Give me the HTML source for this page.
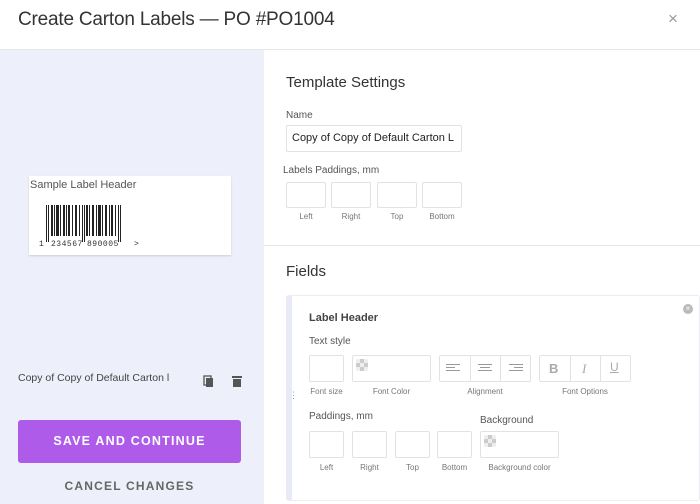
<!DOCTYPE html>
<html><head><meta charset="utf-8"><style>
*{box-sizing:border-box;margin:0;padding:0}
body{width:700px;height:504px;overflow:hidden;background:#fff;font-family:"Liberation Sans",sans-serif;color:#333;position:relative}
.a{position:absolute}
.box{position:absolute;border:1px solid #e2e2e2;border-radius:2px;background:#fff}
.lb{position:absolute;font-size:8px;color:#777;text-align:center}
.hd{position:absolute;font-size:10px;color:#555}
.ck{position:absolute;width:12px;height:12px;background:
linear-gradient(45deg,#ccc 25%,transparent 25%,transparent 75%,#ccc 75%),linear-gradient(45deg,#ccc 25%,#eee 25%,#eee 75%,#ccc 75%);background-size:8px 8px;background-position:0 0,4px 4px;border-radius:2px}
</style></head><body>
<div class="a" style="left:18px;top:9px;font-size:19px;color:#333;letter-spacing:-0.2px">Create Carton Labels — PO #PO1004</div>
<div class="a" style="left:668px;top:9px;font-size:17px;color:#999">×</div>
<div class="a" style="left:0;top:49px;width:700px;height:1px;background:#e6e6e6"></div>
<div class="a" style="left:0;top:50px;width:264px;height:454px;background:#edf0fa"></div>
<div class="a" style="left:29px;top:176px;width:202px;height:79px;background:#fff;box-shadow:0 1px 2px rgba(0,0,0,.15)"></div>
<div class="a" style="left:30px;top:179px;font-size:11px;color:#555">Sample Label Header</div>
<svg class="a" style="left:38px;top:205px" width="110" height="45">
<g fill="#222">
<rect x="8" y="0" width="1" height="37"/><rect x="10" y="0" width="1" height="37"/><rect x="13" y="0" width="2" height="31"/><rect x="16" y="0" width="1" height="31"/><rect x="18" y="0" width="3" height="31"/><rect x="22" y="0" width="1" height="31"/><rect x="25" y="0" width="2" height="31"/><rect x="28" y="0" width="1" height="31"/><rect x="30" y="0" width="2" height="31"/><rect x="34" y="0" width="1" height="31"/><rect x="37" y="0" width="2" height="31"/><rect x="41" y="0" width="1" height="31"/><rect x="44" y="0" width="1" height="37"/><rect x="46" y="0" width="1" height="37"/><rect x="48" y="0" width="2" height="31"/><rect x="51" y="0" width="1" height="31"/><rect x="54" y="0" width="2" height="31"/><rect x="58" y="0" width="1" height="31"/><rect x="60" y="0" width="3" height="31"/><rect x="64" y="0" width="1" height="31"/><rect x="67" y="0" width="2" height="31"/><rect x="71" y="0" width="1" height="31"/><rect x="73" y="0" width="2" height="31"/><rect x="77" y="0" width="1" height="31"/><rect x="80" y="0" width="1" height="37"/><rect x="82" y="0" width="1" height="37"/>
</g>
<text x="1" y="41" font-size="8" font-family="Liberation Mono" fill="#333">1</text>
<text x="13" y="41" font-size="8" font-family="Liberation Mono" fill="#333" letter-spacing="0.5">234567</text>
<text x="49" y="41" font-size="8" font-family="Liberation Mono" fill="#333" letter-spacing="0.5">890005</text>
<text x="96" y="41" font-size="8" font-family="Liberation Mono" fill="#333">&gt;</text>
</svg>
<div class="a" style="left:18px;top:372px;font-size:10.5px;color:#444">Copy of Copy of Default Carton l</div>
<svg class="a" style="left:203px;top:375px" width="12" height="13"><rect x="1" y="1" width="7" height="9" fill="none" stroke="#555" stroke-width="1.3"/><rect x="3" y="3" width="7" height="9" fill="#555"/></svg>
<svg class="a" style="left:231px;top:375px" width="12" height="13"><rect x="1" y="1" width="10" height="2" fill="#555"/><rect x="2" y="4" width="8" height="8" fill="#555"/></svg>
<div class="a" style="left:18px;top:420px;width:223px;height:43px;background:#ae5bea;border-radius:3px;color:#fff;font-weight:bold;font-size:12.5px;letter-spacing:1.2px;text-align:center;line-height:43px">SAVE AND CONTINUE</div>
<div class="a" style="left:18px;top:479px;width:223px;text-align:center;font-weight:bold;font-size:12px;letter-spacing:1.2px;color:#666">CANCEL CHANGES</div>

<div class="a" style="left:286px;top:74px;font-size:15px;color:#333">Template Settings</div>
<div class="hd" style="left:286px;top:110px">Name</div>
<div class="box" style="left:286px;top:125px;width:176px;height:27px"></div>
<div class="a" style="left:292px;top:132px;font-size:11px;color:#222;white-space:nowrap;width:166px;overflow:hidden">Copy of Copy of Default Carton L</div>
<div class="hd" style="left:283px;top:165px">Labels Paddings, mm</div>
<div class="box" style="left:286px;top:182px;width:40px;height:26px"></div>
<div class="box" style="left:331px;top:182px;width:40px;height:26px"></div>
<div class="box" style="left:377px;top:182px;width:40px;height:26px"></div>
<div class="box" style="left:422px;top:182px;width:40px;height:26px"></div>
<div class="lb" style="left:286px;top:212px;width:40px">Left</div>
<div class="lb" style="left:331px;top:212px;width:40px">Right</div>
<div class="lb" style="left:377px;top:212px;width:40px">Top</div>
<div class="lb" style="left:422px;top:212px;width:40px">Bottom</div>
<div class="a" style="left:264px;top:245px;width:436px;height:1px;background:#e6e6e6"></div>
<div class="a" style="left:286px;top:263px;font-size:15px;color:#333">Fields</div>

<div class="a" style="left:286px;top:295px;width:414px;height:206px;border:1px solid #ebedf5;border-left:6px solid #e8eaf8;border-radius:3px"></div>
<div class="a" style="left:289px;top:393px;font-size:9px;color:#999;line-height:4px">⋮</div>
<div class="a" style="left:683px;top:304px;width:10px;height:10px;border-radius:50%;background:#bbb;color:#fff;font-size:8px;line-height:10px;text-align:center">×</div>
<div class="a" style="left:309px;top:312px;font-size:11px;font-weight:bold;color:#444">Label Header</div>
<div class="hd" style="left:309px;top:336px">Text style</div>
<div class="box" style="left:309px;top:355px;width:35px;height:27px"></div>
<div class="box" style="left:352px;top:355px;width:79px;height:27px"></div><div class="ck" style="left:356px;top:359px"></div>
<div class="box" style="left:439px;top:355px;width:92px;height:27px"></div>
<div class="a" style="left:470px;top:356px;width:1px;height:25px;background:#e2e2e2"></div>
<div class="a" style="left:500px;top:356px;width:1px;height:25px;background:#e2e2e2"></div>
<svg class="a" style="left:446px;top:363px" width="80" height="10"><g stroke="#999" stroke-width="1"><path d="M0 1.5h14M0 4.5h9M0 7.5h14"/><path d="M32 1.5h14M34 4.5h10M32 7.5h14"/><path d="M63 1.5h14M68 4.5h9M63 7.5h14"/></g></svg>
<div class="box" style="left:539px;top:355px;width:92px;height:27px"></div>
<div class="a" style="left:570px;top:356px;width:1px;height:25px;background:#e2e2e2"></div>
<div class="a" style="left:600px;top:356px;width:1px;height:25px;background:#e2e2e2"></div>
<div class="a" style="left:549px;top:361px;font-size:13px;font-weight:bold;color:#aaa">B</div>
<div class="a" style="left:582px;top:361px;font-size:13px;font-style:italic;color:#aaa;font-family:'Liberation Serif',serif">I</div>
<div class="a" style="left:610px;top:360px;font-size:12px;text-decoration:underline;color:#aaa">U</div>
<div class="lb" style="left:305px;top:387px;width:43px">Font size</div>
<div class="lb" style="left:352px;top:387px;width:79px">Font Color</div>
<div class="lb" style="left:439px;top:387px;width:92px">Alignment</div>
<div class="lb" style="left:539px;top:387px;width:92px">Font Options</div>
<div class="hd" style="left:309px;top:411px">Paddings, mm</div>
<div class="hd" style="left:480px;top:415px">Background</div>
<div class="box" style="left:309px;top:431px;width:35px;height:27px"></div>
<div class="box" style="left:352px;top:431px;width:35px;height:27px"></div>
<div class="box" style="left:395px;top:431px;width:35px;height:27px"></div>
<div class="box" style="left:437px;top:431px;width:35px;height:27px"></div>
<div class="box" style="left:480px;top:431px;width:79px;height:27px"></div><div class="ck" style="left:484px;top:435px"></div>
<div class="lb" style="left:309px;top:463px;width:35px">Left</div>
<div class="lb" style="left:352px;top:463px;width:35px">Right</div>
<div class="lb" style="left:395px;top:463px;width:35px">Top</div>
<div class="lb" style="left:437px;top:463px;width:35px">Bottom</div>
<div class="lb" style="left:476px;top:463px;width:87px">Background color</div>
</body></html>
